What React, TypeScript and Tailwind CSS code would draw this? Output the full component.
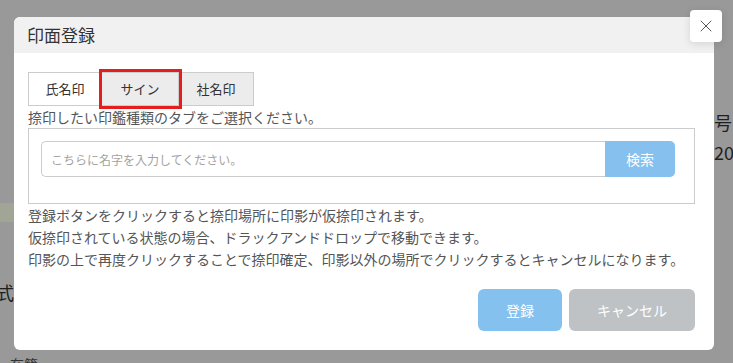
import { X } from "lucide-react";

const font = "font-['Noto_Sans_CJK_JP','Noto_Sans',sans-serif]";

function BackgroundPage() {
  return (
    <div className="flex justify-between h-full">
      <div className="flex flex-col">
        <div className="shrink-0 mt-[203px] h-[19px] w-[60px] bg-[#a0a595]" />
        <div className="shrink-0 mt-[58px] -ml-[22px] text-[18px] leading-[24px] text-[#1f1f1f]">書式</div>
        <div className="shrink-0 mt-[50px] ml-[10px] text-[14px] leading-[20px] text-[#333]">在籍</div>
      </div>
      <div className="flex flex-col pt-[110px] w-[19px] overflow-hidden">
        <div className="text-[18px] leading-[24px] text-[#1f1f1f] whitespace-nowrap">号：</div>
        <div className="mt-[6px] text-[18px] leading-[24px] text-[#1f1f1f] whitespace-nowrap">2022</div>
      </div>
    </div>
  );
}

function Tabs() {
  return (
    <div className="flex h-[34px] text-[13px] text-[#333]">
      <div className="w-[74px] flex items-center justify-center border border-[#ccc] bg-white">氏名印</div>
      <div className="w-[77px] flex items-center justify-center border-y border-r border-[#ccc] bg-[#ececec] outline-[3px] outline-solid outline-[#e41e1e] outline-offset-0 relative z-10">
        サイン
      </div>
      <div className="w-[75px] flex items-center justify-center border-y border-r border-[#ccc] bg-[#ececec]">社名印</div>
    </div>
  );
}

export default function App() {
  return (
    <div className={`relative w-[733px] h-[363px] overflow-hidden bg-[#999] ${font}`}>
      <BackgroundPage />

      <div className="absolute inset-0 pl-[14px] pt-[17px]">
        <div className="relative w-[700px] bg-white rounded-[6px]">
          <div className="h-[36px] bg-[#f1f1f1] rounded-t-[6px] px-[13px] text-[17px] leading-[36px] text-[#333]">
            印面登録
          </div>

          <button
            type="button"
            className="absolute -top-[7px] left-[676px] w-[32px] h-[32px] rounded-[4px] bg-white shadow-[0_2px_8px_rgba(0,0,0,0.12)] flex items-center justify-center text-[#555]"
            aria-label="Close"
          >
            <X size={20} strokeWidth={1.2} />
          </button>

          <div className="pl-[14px] pr-[19px] pt-[19px] pb-[19px]">
            <Tabs />
            <p className="text-[14px] leading-[22px] text-[#555]">捺印したい印鑑種類のタブをご選択ください。</p>

            <div className="h-[76px] border border-[#ccc] pl-[12px] pt-[12px]">
              <div className="flex h-[36px]">
                <input
                  type="text"
                  placeholder="こちらに名字を入力してください。"
                  className="w-[564px] h-full border border-[#ccc] border-r-0 rounded-l-[5px] pl-[9px] text-[12px] outline-none placeholder:text-[#a3a3a3]"
                />
                <button
                  type="button"
                  className="w-[70px] h-full bg-[#85c0ef] rounded-r-[5px] text-white text-[14px]"
                >
                  検索
                </button>
              </div>
            </div>

            <div className="text-[14px] leading-[22px] text-[#555]">
              <p>登録ボタンをクリックすると捺印場所に印影が仮捺印されます。</p>
              <p>仮捺印されている状態の場合、ドラックアンドドロップで移動できます。</p>
              <p>印影の上で再度クリックすることで捺印確定、印影以外の場所でクリックするとキャンセルになります。</p>
            </div>

            <div className="mt-[19px] flex justify-end gap-[7px]">
              <button type="button" className="w-[84px] h-[42px] rounded-[6px] bg-[#85c1ef] text-white text-[14px]">
                登録
              </button>
              <button type="button" className="w-[126px] h-[42px] rounded-[6px] bg-[#bec2c5] text-white text-[14px]">
                キャンセル
              </button>
            </div>
          </div>
        </div>
      </div>
    </div>
  );
}
